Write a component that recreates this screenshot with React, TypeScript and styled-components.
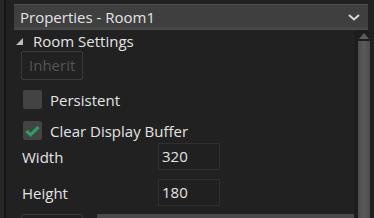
import React from 'react'
import styled, {createGlobalStyle} from 'styled-components'

const GlobalStyle = createGlobalStyle`
  html, body {
    margin: 0;
    padding: 0;
    background: #222222;
  }
  body {
    font-family: 'Open Sans', 'Noto Sans', sans-serif;
  }
`

function Checkbox({checked}: {checked?: boolean}) {
  return (
    <Box>
      {checked && (
        <svg width="15" height="12" viewBox="0 0 15 12">
          <path d="M1.5 6 L5.5 9.8 L13.5 2" fill="none" stroke="#2f9d63" strokeWidth="3.2" />
        </svg>
      )}
    </Box>
  )
}

function App() {
  return (
    <>
      <GlobalStyle />
      <Window>
        <LeftEdge />
        <Main>
          <Header>
            <HeaderTitle>Properties - Room1</HeaderTitle>
            <svg width="12" height="7" viewBox="0 0 12 7">
              <path d="M1 1 L6 5.5 L11 1" fill="none" stroke="#d8d8d8" strokeWidth="2" />
            </svg>
          </Header>
          <Body>
            <Content>
              <SectionRow>
                <Triangle />
                <SectionTitle>Room Settings</SectionTitle>
              </SectionRow>
              <Indented>
                <GhostButton>Inherit</GhostButton>
                <CheckRow top={10}>
                  <Checkbox />
                  <Label>Persistent</Label>
                </CheckRow>
                <CheckRow top={12}>
                  <Checkbox checked />
                  <Label>Clear Display Buffer</Label>
                </CheckRow>
                <FieldRow top={3}>
                  <Label>Width</Label>
                  <Field>320</Field>
                </FieldRow>
                <FieldRow top={9}>
                  <Label>Height</Label>
                  <Field>180</Field>
                </FieldRow>
                <BottomRow>
                  <GhostButton />
                  <Bar />
                </BottomRow>
              </Indented>
            </Content>
            <Scrollbar>
              <ArrowUp />
              <Thumb />
            </Scrollbar>
          </Body>
        </Main>
      </Window>
    </>
  )
}

const Window = styled.div`
  display: flex;
  width: 374px;
  height: 218px;
  overflow: hidden;
  background: #212121;
`

const LeftEdge = styled.div`
  width: 4px;
  background: #272727;
  border-right: 2px solid #171717;
`

const Main = styled.div`
  flex: 1;
  display: flex;
  flex-direction: column;
  padding-left: 8px;
  min-width: 0;
`

const Header = styled.div`
  display: flex;
  align-items: center;
  justify-content: space-between;
  height: 24px;
  margin: 4px 6px 0 0;
  padding: 0 8px 0 6px;
  background: #3f3f3f;
  border-top: 1px solid #505050;
  border-bottom: 1px solid #4c4c4c;
  box-shadow: inset 0 -2px 0 #454545;
`

const HeaderTitle = styled.span`
  color: #e4e4e4;
  font-size: 15px;
`

const Body = styled.div`
  flex: 1;
  display: flex;
  min-height: 0;
`

const Content = styled.div`
  flex: 1;
  display: flex;
  flex-direction: column;
`

const SectionRow = styled.div`
  display: flex;
  align-items: center;
  height: 23px;
  padding-left: 1px;
`

const Triangle = styled.div`
  width: 0;
  height: 0;
  border-left: 7px solid transparent;
  border-bottom: 7px solid #bdbdbd;
  margin: 2px 10px 0 1px;
`

const SectionTitle = styled.span`
  color: #e4e4e4;
  font-size: 15px;
  line-height: 20px;
  margin-top: 1px;
`

const Indented = styled.div`
  display: flex;
  flex-direction: column;
  padding-left: 7px;
`

const GhostButton = styled.div`
  box-sizing: border-box;
  width: 62px;
  height: 29px;
  border: 1px solid #3a3a3a;
  border-radius: 2px;
  color: #555555;
  font-size: 15px;
  line-height: 27px;
  padding-left: 7px;
`

const CheckRow = styled.div<{top: number}>`
  display: flex;
  align-items: center;
  gap: 8px;
  height: 19px;
  margin-top: ${p => p.top}px;
  padding-left: 2px;
`

const Box = styled.div`
  width: 19px;
  height: 19px;
  border-radius: 2px;
  background: #434343;
  display: flex;
  align-items: center;
  justify-content: center;
`

const Label = styled.span`
  color: #e4e4e4;
  font-size: 15px;
  line-height: 20px;
`

const FieldRow = styled.div<{top: number}>`
  display: grid;
  grid-template-columns: 136px 62px;
  align-items: center;
  height: 27px;
  margin-top: ${p => p.top}px;
  padding-left: 1px;
`

const Field = styled.div`
  box-sizing: border-box;
  height: 27px;
  border: 1px solid #2f2f2f;
  background: #202020;
  color: #e4e4e4;
  font-size: 15px;
  line-height: 25px;
  padding-left: 3px;
`

const BottomRow = styled.div`
  display: flex;
  gap: 14px;
  margin-top: 8px;
`

const Bar = styled.div`
  flex: 1;
  height: 10px;
  background: #4a4a4a;
`

const Scrollbar = styled.div`
  width: 16px;
  margin-right: 4px;
  background: #1d1d1d;
  display: flex;
  flex-direction: column;
  align-items: flex-end;
`

const ArrowUp = styled.div`
  width: 0;
  height: 0;
  margin: 3px 1px 0 0;
  border-left: 5px solid transparent;
  border-right: 5px solid transparent;
  border-bottom: 6px solid #5c5c5c;
`

const Thumb = styled.div`
  width: 12px;
  flex: 1;
  margin-top: 2px;
  background: linear-gradient(to right, #4c4c4c, #5a5a5a, #4c4c4c);
`

export default App
